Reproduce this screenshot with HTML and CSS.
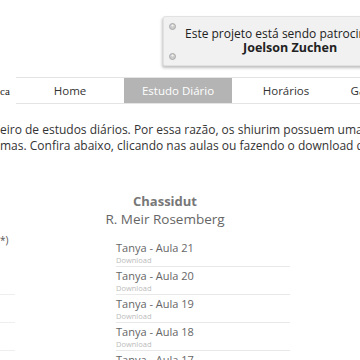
FILE: index.html
```html
<!DOCTYPE html>
<html lang="pt-BR">
<head>
    <meta charset="UTF-8">
    <meta name="viewport" content="width=device-width, initial-scale=1.0">
    <title>Estudo Diário</title>
    <link rel="stylesheet" href="styles.css">
</head>
<body>

    <!-- topo / patrocinador -->
    <div class="header">
        <div class="sponsor">
            <div class="sponsor-dots">
                <span class="dot">+</span>
                <span class="dot">+</span>
            </div>
            <div class="sponsor-text">
                <p>Este projeto está sendo patrocinado por:</p>
                <p class="sponsor-name">Joelson Zuchen</p>
            </div>
        </div>
    </div>

    <!-- menu -->
    <div class="menu-row">
        <span class="menu-cut">ca</span>
        <ul class="menu">
            <li><a href="#">Home</a></li>
            <li class="active"><a href="#">Estudo Diário</a></li>
            <li><a href="#">Horários</a></li>
            <li><a href="#">Galeria de Fotos</a></li>
        </ul>
    </div>

    <!-- texto -->
    <div class="intro">
        <p>eiro de estudos diários. Por essa razão, os shiurim possuem uma</p>
        <p>mas. Confira abaixo, clicando nas aulas ou fazendo o download das</p>
    </div>

    <!-- colunas -->
    <div class="columns">
        <div class="side-col">
            <p class="side-note">*)</p>
            <ul class="side-list">
                <li></li>
                <li></li>
                <li></li>
            </ul>
        </div>

        <div class="main-col">
            <div class="main-title">
                <h2>Chassidut</h2>
                <h3>R. Meir Rosemberg</h3>
            </div>
            <ul class="lessons">
                <li><a href="#">Tanya - Aula 21</a><span>Download</span></li>
                <li><a href="#">Tanya - Aula 20</a><span>Download</span></li>
                <li><a href="#">Tanya - Aula 19</a><span>Download</span></li>
                <li><a href="#">Tanya - Aula 18</a><span>Download</span></li>
                <li><a href="#">Tanya - Aula 17</a><span>Download</span></li>
            </ul>
        </div>
    </div>

</body>
</html>
```

FILE: styles.css
```css
* {
    margin: 0;
    padding: 0;
    box-sizing: border-box;
}

body {
    font-family: "Open Sans", Arial, sans-serif;
    background-color: #fff;
    color: #333;
    width: 360px;
    height: 360px;
    overflow: hidden;
}

ul {
    list-style: none;
}

a {
    text-decoration: none;
    color: inherit;
}

/* topo */
.header {
    height: 77px;
    padding-top: 16px;
    padding-left: 163px;
}

.sponsor {
    display: flex;
    width: 240px;
    height: 50px;
    background-color: #f1f1f1;
    border: 1px solid #e2e2e2;
    border-radius: 2px;
    box-shadow: -1px 2px 3px rgba(0, 0, 0, 0.25);
}

.sponsor-dots {
    display: flex;
    flex-direction: column;
    justify-content: space-between;
    padding: 6px 0 5px 5px;
}

.dot {
    width: 7px;
    height: 7px;
    border-radius: 50%;
    background-color: #ccc;
    border: 1px solid #aaa;
    color: #fff;
    font-size: 6px;
    line-height: 5px;
    text-align: center;
}

.sponsor-text {
    padding-top: 10px;
    padding-left: 9px;
    font-size: 12px;
    color: #222;
    white-space: nowrap;
}

.sponsor-text p {
    line-height: 14px;
}

.sponsor-name {
    font-weight: bold;
    padding-left: 58px;
    font-size: 12.5px;
}

/* menu */
.menu-row {
    display: flex;
    align-items: center;
}

.menu-cut {
    width: 16px;
    flex-shrink: 0;
    font-family: "Liberation Serif", serif;
    font-size: 11px;
    color: #222;
}

.menu {
    display: flex;
    border-top: 1px solid #e4e4e4;
    border-bottom: 1px solid #e4e4e4;
    white-space: nowrap;
}

.menu li {
    width: 108px;
    height: 25px;
    line-height: 25px;
    text-align: center;
    font-size: 11.5px;
    color: #333;
    flex-shrink: 0;
}

.menu li.active {
    background-color: #b4b4b4;
    color: #fff;
}

/* texto */
.intro {
    padding-top: 18px;
    font-size: 12px;
    line-height: 16px;
    color: #333;
    white-space: nowrap;
}

/* colunas */
.columns {
    display: flex;
    padding-top: 38px;
}

.side-col {
    width: 116px;
    flex-shrink: 0;
    padding-top: 41px;
}

.side-note {
    font-size: 10px;
    line-height: 14px;
    color: #555;
}

.side-list {
    padding-top: 47px;
}

.side-list li {
    width: 15px;
    height: 28px;
    border-top: 1px solid #eee;
}

.main-col {
    width: 174px;
    flex-shrink: 0;
}

.main-title {
    width: 250px;
    margin-left: -76px;
    text-align: center;
}

.main-title h2 {
    font-size: 13px;
    font-weight: bold;
    color: #777;
    line-height: 18px;
}

.main-title h3 {
    font-size: 13.5px;
    font-weight: normal;
    color: #666;
    line-height: 18px;
}

.lessons {
    padding-top: 11px;
}

.lessons li {
    padding-top: 2px;
    padding-bottom: 1px;
    border-bottom: 1px solid #e8e8e8;
}

.lessons a {
    display: block;
    font-size: 11px;
    line-height: 14px;
    color: #666;
}

.lessons span {
    display: block;
    font-size: 7.5px;
    line-height: 10px;
    color: #bbb;
}
```
